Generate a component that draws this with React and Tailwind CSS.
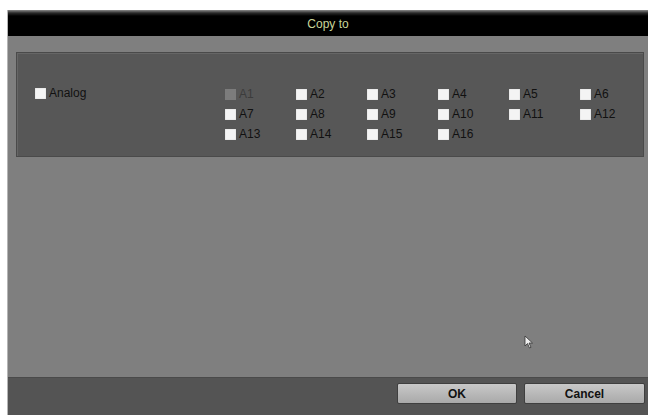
import React from "react";

const items = ["A1","A2","A3","A4","A5","A6","A7","A8","A9","A10","A11","A12","A13","A14","A15","A16"];

function Box({ disabled }) {
  return (
    <span
      className={
        "inline-block w-[11px] h-[11px] shrink-0 " +
        (disabled ? "bg-[#7c7c7c]" : "bg-[#f4f4f4] shadow-[inset_0_0_1px_#999]")
      }
    />
  );
}

export default function App() {
  return (
    <div className="w-[654px] h-[415px] bg-white overflow-hidden relative" style={{ fontFamily: '"Liberation Sans", Arial, sans-serif' }}>
      <div className="ml-[7px] mt-[10px] w-[641px] h-[405px] flex flex-col border-l border-[#b5b5b5]">
        {/* title bar */}
        <div className="h-[26px] flex items-center justify-center bg-[linear-gradient(to_bottom,#8a8a8a_0px,#2a2a2a_3px,#000_6px,#000_100%)]">
          <span className="text-[12px] text-[#c8d59a] mt-[1px]">Copy to</span>
        </div>
        {/* body */}
        <div className="flex-1 bg-[#7f7f7f] pl-[8px] pr-[4px] pt-[16px] flex flex-col">
          <div className="h-[105px] bg-[#575757] border border-[#4a4a4a] shadow-[inset_1px_1px_0_#666] flex">
            <div className="w-[208px] shrink-0 pl-[18px] pt-[34px]">
              <div className="flex items-center gap-[3px] text-[12px] text-[#111] leading-none">
                <Box />
                <span>Analog</span>
              </div>
            </div>
            <div className="shrink-0 pt-[36px] grid grid-cols-[repeat(5,71px)_50px] auto-rows-[20px]">
              {items.map((t, i) => (
                <div key={t} className="flex items-start gap-[3px] text-[12px] leading-[11px]">
                  <Box disabled={i === 0} />
                  <span className={i === 0 ? "text-[#3c3c3c]" : "text-[#111]"}>{t}</span>
                </div>
              ))}
            </div>
          </div>
          <div className="flex-1" />
        </div>
        {/* bottom bar */}
        <div className="h-[38px] bg-[#545454] border-t border-[#4a4a4a] flex items-start justify-end pt-[5px] pr-[3px] gap-[7px]">
          <button className="w-[120px] h-[21px] rounded-[2px] border border-[#3f3f3f] bg-[linear-gradient(to_bottom,#c8c8c8,#a9a9a9)] text-[12px] text-[#111] font-bold leading-none">
            OK
          </button>
          <button className="w-[121px] h-[21px] rounded-[2px] border border-[#3f3f3f] bg-[linear-gradient(to_bottom,#c8c8c8,#a9a9a9)] text-[12px] text-[#111] font-bold leading-none">
            Cancel
          </button>
        </div>
      </div>
      {/* mouse cursor */}
      <svg className="absolute left-[524px] top-[335px]" width="10" height="14" viewBox="0 0 10 14">
        <path d="M1 1 L1 11 L3.5 8.5 L5.5 13 L7 12.3 L5 8 L8.5 8 Z" fill="#eee" stroke="#333" strokeWidth="0.8" />
      </svg>
    </div>
  );
}
